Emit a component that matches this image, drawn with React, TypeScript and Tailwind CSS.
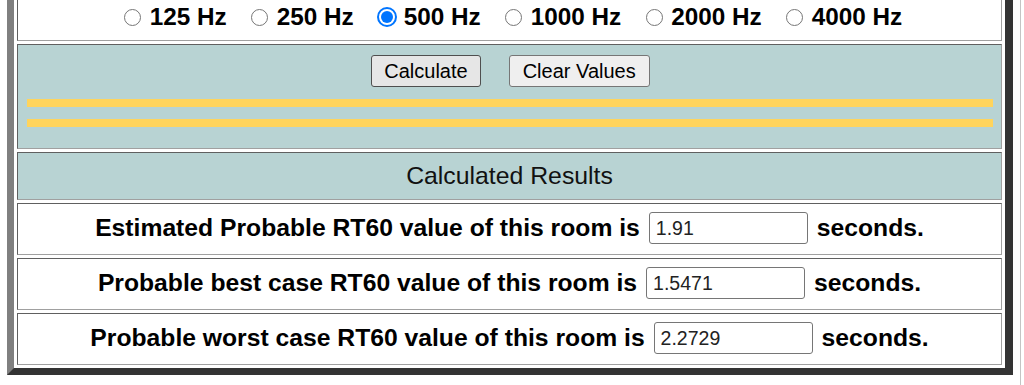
import React from 'react';

const Radio = ({ checked }: { checked?: boolean }) => (
  <span className="w-[20px] h-[20px] flex items-center justify-center shrink-0">
    {checked ? (
      <span className="w-[20px] h-[20px] rounded-full border-[2px] border-[#0075ff] bg-white flex items-center justify-center">
        <span className="w-[12px] h-[12px] rounded-full bg-[#0075ff]" />
      </span>
    ) : (
      <span className="w-[17px] h-[17px] rounded-full border border-[#767676] bg-white" />
    )}
  </span>
);

const ResultRow = ({ label, value }: { label: string; value: string }) => (
  <div className="h-[52px] border border-t-[#606060] border-l-[#606060] border-b-[#a0a0a0] border-r-[#a0a0a0] bg-white flex items-center justify-center gap-[9px] pb-[2px]">
    <span className="text-[24.7px] font-bold text-black leading-none">{label}</span>
    <input
      readOnly
      value={value}
      className="w-[159px] h-[32px] border border-[#767676] rounded-[3px] px-[6px] text-[19.5px] text-[#222] bg-white outline-none"
    />
    <span className="text-[24.7px] font-bold text-black leading-none">seconds.</span>
  </div>
);

const App = () => {
  const freqs = [
    { label: '125 Hz', checked: false },
    { label: '250 Hz', checked: false },
    { label: '500 Hz', checked: true },
    { label: '1000 Hz', checked: false },
    { label: '2000 Hz', checked: false },
    { label: '4000 Hz', checked: false },
  ];

  const cell = 'border border-t-[#606060] border-l-[#606060] border-b-[#a0a0a0] border-r-[#a0a0a0]';

  return (
    <div
      className="w-[1021px] h-[385px] overflow-hidden border-r border-[#c4c4c4] pl-[7px] bg-white"
      style={{ fontFamily: '"Liberation Sans", Arial, sans-serif' }}
    >
      <div className="w-[1006px] -mt-[20px] border-[7px] border-t-[#808080] border-l-[#808080] border-b-[#333333] border-r-[#333333] border-r-[8px] p-[3px] flex flex-col gap-[3px]">
        <div className={`${cell} h-[51px] bg-white flex items-center justify-center pt-[4px] pl-[6px] gap-[23px]`}>
          {freqs.map((f) => (
            <label key={f.label} className="flex items-center gap-[7px]">
              <Radio checked={f.checked} />
              <span className="text-[24.3px] font-bold text-black leading-none">{f.label}</span>
            </label>
          ))}
        </div>

        <div className={`${cell} h-[105px] bg-[#b8d3d3] pt-[10px]`}>
          <div className="flex justify-center gap-[28px] pl-[2px]">
            <button className="h-[32px] px-[12px] text-[20px] text-black bg-[#e6e6e6] border border-[#4f4f4f] rounded-[3px]">
              Calculate
            </button>
            <button className="h-[32px] px-[13px] text-[20px] text-black bg-[#efefef] border border-[#767676] rounded-[3px]">
              Clear Values
            </button>
          </div>
          <div className="mt-[12px] ml-[9px] mr-[8px] h-[8px] bg-[#ffd45c]" />
          <div className="mt-[12px] ml-[9px] mr-[8px] h-[8px] bg-[#ffd45c]" />
        </div>

        <div className={`${cell} h-[48px] bg-[#b8d3d3] flex items-center justify-center`}>
          <span className="text-[24.8px] text-[#111] leading-none">Calculated Results</span>
        </div>

        <ResultRow label="Estimated Probable RT60 value of this room is" value="1.91" />
        <ResultRow label="Probable best case RT60 value of this room is" value="1.5471" />
        <ResultRow label="Probable worst case RT60 value of this room is" value="2.2729" />
      </div>
    </div>
  );
};

export default App;
